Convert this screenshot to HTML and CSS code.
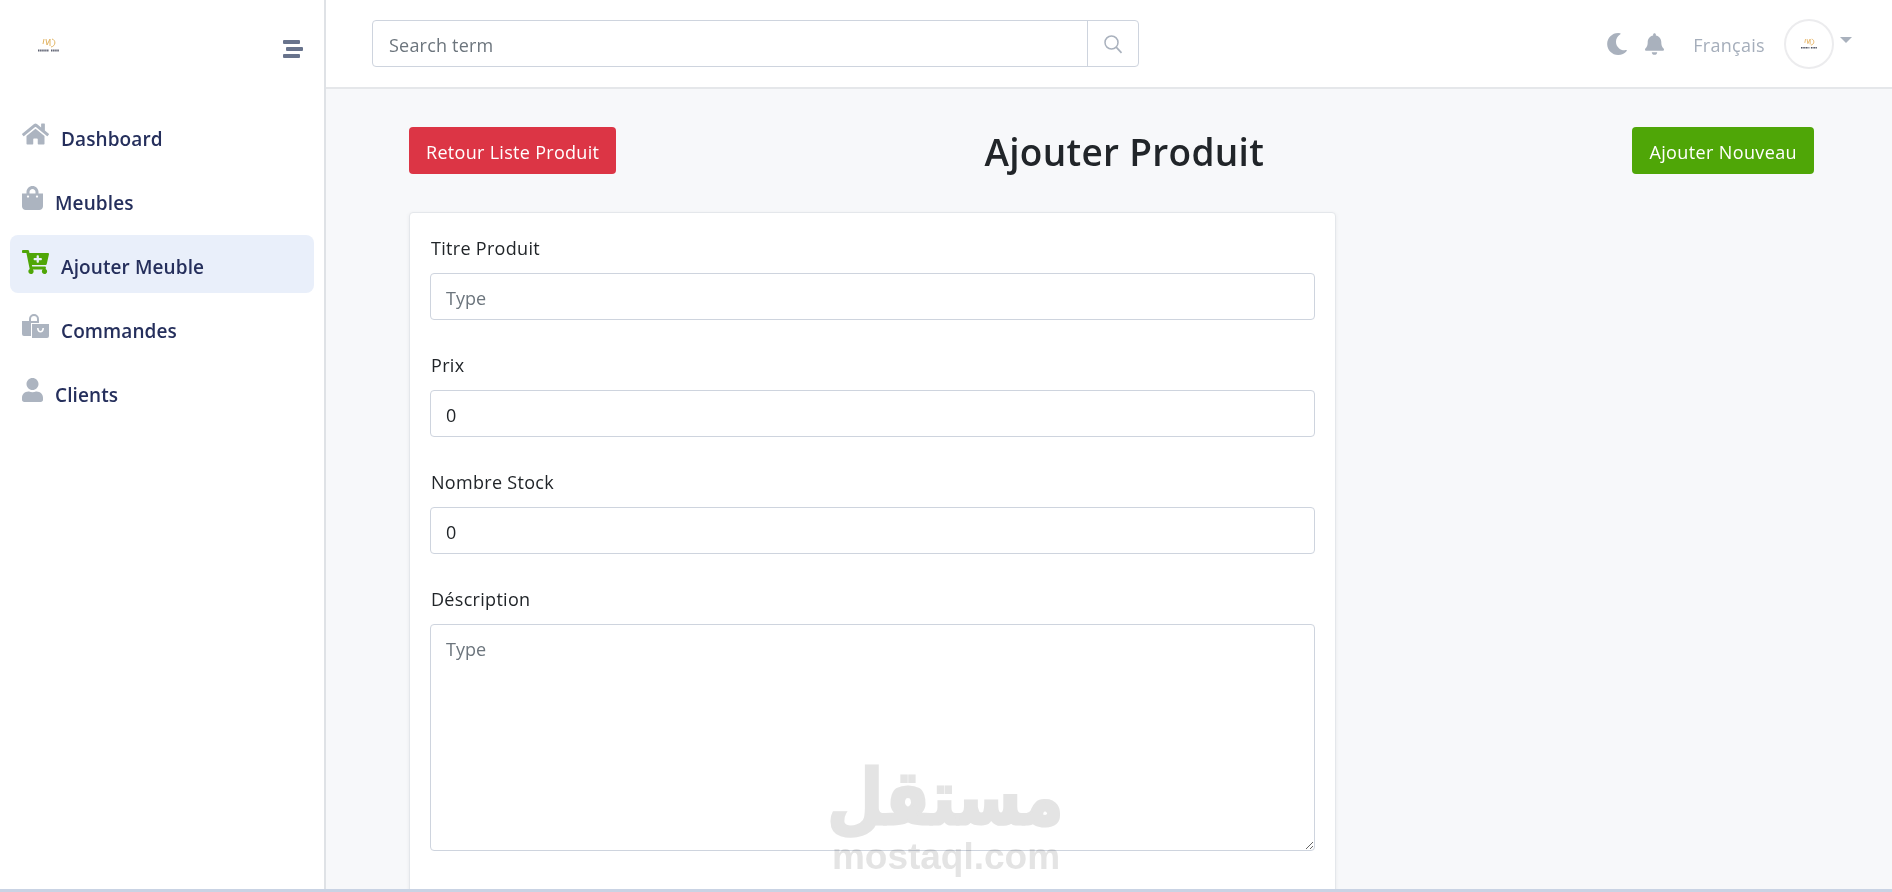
FILE: index.html
```html
<!DOCTYPE html>
<html lang="fr">
<head>
  <meta charset="UTF-8" />
  <meta name="viewport" content="width=device-width, initial-scale=1" />
  <title>Ajouter Produit</title>
  <link rel="stylesheet" href="styles.css">
</head>
<body>
  <div class="shell">
    <!-- Sidebar -->
    <aside class="sidebar">
      <div class="brand">
        <svg class="logo" viewBox="0 0 21 15">
          <path d="M6 1 L5 6 M8 1 L9 7 L12 1 L12 8 M14 1 C18 2 18 8 13 9" fill="none" stroke="#e2b565" stroke-width="1"/>
          <path d="M0 12.5 H11 M13 12.5 H21" stroke="#5c6070" stroke-width="2" stroke-dasharray="1.5 .6"/>
        </svg>
        <div class="burger"><span></span><span class="burger-mid"></span><span></span></div>
      </div>
      <nav class="nav">
        <a class="nav-item">
          <svg class="nav-icon icon-wide" viewBox="0 0 576 512"><path d="M280.37 148.26L96 300.11V464a16 16 0 0 0 16 16l112.06-.29a16 16 0 0 0 15.92-16V368a16 16 0 0 1 16-16h64a16 16 0 0 1 16 16v95.64a16 16 0 0 0 16 16.05L464 480a16 16 0 0 0 16-16V300L295.67 148.26a12.19 12.19 0 0 0-15.3 0zM571.6 251.47L488 182.56V44.05a12 12 0 0 0-12-12h-56a12 12 0 0 0-12 12v72.61L318.47 43a48 48 0 0 0-61 0L4.34 251.47a12 12 0 0 0-1.6 16.9l25.5 31A12 12 0 0 0 45.15 301l235.22-193.74a12.19 12.19 0 0 1 15.3 0L530.9 301a12 12 0 0 0 16.9-1.6l25.5-31a12 12 0 0 0-1.7-16.93z"/></svg>
          Dashboard
        </a>
        <a class="nav-item">
          <svg class="nav-icon" viewBox="0 0 448 512"><path d="M352 160v-32C352 57.42 294.579 0 224 0 153.42 0 96 57.42 96 128v32H0v272c0 44.183 35.817 80 80 80h288c44.183 0 80-35.817 80-80V160h-96zm-192-32c0-35.29 28.71-64 64-64s64 28.71 64 64v32H160v-32zm160 120c-13.255 0-24-10.745-24-24s10.745-24 24-24 24 10.745 24 24-10.745 24-24 24zm-192 0c-13.255 0-24-10.745-24-24s10.745-24 24-24 24 10.745 24 24-10.745 24-24 24z"/></svg>
          Meubles
        </a>
        <a class="nav-item active">
          <svg class="nav-icon icon-wide" viewBox="0 0 576 512"><path d="M504.717 320H211.572l6.545 32h268.418c15.401 0 26.816 14.301 23.403 29.319l-5.517 24.276C523.112 414.668 536 433.828 536 456c0 31.202-25.519 56.444-56.824 55.994-29.823-.429-54.35-24.631-55.155-54.447-.44-16.287 6.085-31.049 16.803-41.548H231.176C241.553 426.165 248 440.326 248 456c0 31.813-26.528 57.431-58.67 55.938-28.54-1.325-51.751-24.385-53.251-52.917-1.158-22.034 10.436-41.455 28.051-51.586L93.883 64H24C10.745 64 0 53.255 0 40V24C0 10.745 10.745 0 24 0h102.529c11.401 0 21.228 8.021 23.513 19.19L159.208 64H551.99c15.401 0 26.816 14.301 23.403 29.319l-47.273 208C525.637 312.246 515.923 320 504.717 320zM408 168h-48v-40c0-8.837-7.163-16-16-16h-16c-8.837 0-16 7.163-16 16v40h-48c-8.837 0-16 7.163-16 16v16c0 8.837 7.163 16 16 16h48v40c0 8.837 7.163 16 16 16h16c8.837 0 16-7.163 16-16v-40h48c8.837 0 16-7.163 16-16v-16c0-8.837-7.163-16-16-16z"/></svg>
          Ajouter Meuble
        </a>
        <a class="nav-item">
          <svg class="nav-icon icon-wide" viewBox="0 0 27 24">
            <path fill-rule="evenodd" d="M7 7V5a5 5 0 0 1 10 0v3h-2V5a3 3 0 0 0-6 0v2z"/>
            <path d="M0 7h17v2H9v13H2a2 2 0 0 1-2-2z"/>
            <path fill-rule="evenodd" d="M10 10h17v12a2 2 0 0 1-2 2H10zM15 14c0 6 7 6 7 0h-1.6c0 4-3.8 4-3.8 0z"/>
          </svg>
          Commandes
        </a>
        <a class="nav-item">
          <svg class="nav-icon" viewBox="0 0 448 512"><path d="M224 256c70.7 0 128-57.3 128-128S294.7 0 224 0 96 57.3 96 128s57.3 128 128 128zm89.6 32h-16.7c-22.2 10.2-46.9 16-72.9 16s-50.6-5.8-72.9-16h-16.7C60.2 288 0 348.2 0 422.4V464c0 26.5 21.5 48 48 48h352c26.5 0 48-21.5 48-48v-41.6c0-74.2-60.2-134.4-134.4-134.4z"/></svg>
          Clients
        </a>
      </nav>
    </aside>

    <div class="content">
      <!-- Top bar -->
      <header class="topbar">
        <div class="search">
          <input class="search-input" type="text" placeholder="Search term" />
          <button class="search-btn" type="button">
            <svg viewBox="0 0 20 20" width="20" height="20"><circle cx="8.5" cy="8.5" r="6.5" fill="none" stroke="#a9b1bd" stroke-width="1.5"/><path d="M13.2 13.2 L18.5 18.8" stroke="#a9b1bd" stroke-width="1.7"/></svg>
          </button>
        </div>
        <div class="topbar-right">
          <svg class="top-icon" viewBox="0 0 512 512"><path d="M283.211 512c78.962 0 151.079-35.925 198.857-94.792 7.068-8.708-.639-21.43-11.562-19.35-124.203 23.654-238.262-71.576-238.262-196.954 0-72.222 38.662-138.635 101.498-174.394 9.686-5.512 7.25-20.197-3.756-22.23A258.156 258.156 0 0 0 283.211 0c-141.309 0-256 114.511-256 256 0 141.309 114.511 256 256 256z"/></svg>
          <svg class="top-icon bell" viewBox="0 0 448 512"><path d="M224 512c35.32 0 63.97-28.65 63.97-64H160.03c0 35.35 28.65 64 63.97 64zm215.39-149.71c-19.32-20.76-55.47-51.99-55.47-154.29 0-77.7-54.48-139.9-127.94-155.16V32c0-17.67-14.32-32-31.98-32s-31.98 14.33-31.98 32v20.84C118.56 68.1 64.08 130.3 64.08 208c0 102.3-36.15 133.53-55.47 154.29-6 6.45-8.66 14.16-8.61 21.71.11 16.4 12.98 32 32.1 32h383.8c19.12 0 32-15.6 32.1-32 .05-7.55-2.61-15.27-8.61-21.71z"/></svg>
          <span class="lang">Français</span>
          <div class="avatar">
            <svg class="avatar-logo" viewBox="0 0 21 15">
              <path d="M6 1 L5 6 M8 1 L9 7 L12 1 L12 8 M14 1 C18 2 18 8 13 9" fill="none" stroke="#e2a84f" stroke-width="1"/>
              <path d="M0 12.5 H11 M13 12.5 H21" stroke="#4d5160" stroke-width="2" stroke-dasharray="1.5 .6"/>
            </svg>
          </div>
          <span class="caret"></span>
        </div>
      </header>

      <main class="page">
        <div class="page-head">
          <button class="btn btn-red" type="button">Retour Liste Produit</button>
          <h1 class="page-title">Ajouter Produit</h1>
          <button class="btn btn-green" type="button">Ajouter Nouveau</button>
        </div>

        <form class="card">
          <div class="field">
            <label>Titre Produit</label>
            <input type="text" placeholder="Type" />
          </div>
          <div class="field">
            <label>Prix</label>
            <input type="text" value="0" />
          </div>
          <div class="field">
            <label>Nombre Stock</label>
            <input type="text" value="0" />
          </div>
          <div class="field">
            <label>Déscription</label>
            <textarea placeholder="Type"></textarea>
          </div>
        </form>
      </main>
    </div>
  </div>
  <div class="bottom-line"></div>

  <!-- Watermark -->
  <div class="watermark">
    <span class="wm-ar" dir="rtl" lang="ar">مستقل</span>
    <span class="wm-en">mostaql.com</span>
  </div>
</body>
</html>
```

FILE: styles.css
```css
* {
  box-sizing: border-box;
}

html, body {
  height: 100%;
}

body {
  margin: 0;
  font-family: "Open Sans", "Noto Sans", sans-serif;
  font-size: 18px;
  letter-spacing: 0.3px;
  color: #212529;
  background-color: #f7f8fa;
  overflow: hidden;
}

.shell {
  display: flex;
  height: 889px;
}

.bottom-line {
  height: 3px;
  background-color: #c9d3e4;
}

/* Sidebar */
.sidebar {
  width: 326px;
  flex-shrink: 0;
  background: #fff;
  border-right: 2px solid #dfe2e6;
}

.brand {
  height: 107px;
  padding: 38px 21px 0 38px;
  display: flex;
  justify-content: space-between;
  align-items: flex-start;
}

.logo {
  width: 21px;
  height: 15px;
}

.burger {
  width: 20px;
  margin-top: 2px;
  display: flex;
  flex-direction: column;
  gap: 3px;
}

.burger span {
  display: block;
  width: 17px;
  height: 4px;
  background-color: #68738c;
  border-radius: 1px;
}

.burger .burger-mid {
  margin-left: 3px;
}

.nav {
  padding: 0 10px;
  display: flex;
  flex-direction: column;
  gap: 6px;
}

.nav-item {
  height: 58px;
  padding: 5px 12px 0;
  display: flex;
  align-items: center;
  gap: 12px;
  border-radius: 8px;
  font-size: 19px;
  font-weight: 600;
  letter-spacing: 0.1px;
  color: #252f5c;
}

.nav-icon {
  width: 21px;
  height: 24px;
  margin-top: -9px;
  fill: #acb4c0;
  flex-shrink: 0;
}

.icon-wide {
  width: 27px;
}

.nav-item.active {
  background-color: #e9effa;
}

.nav-item.active .nav-icon {
  fill: #4fa607;
}

/* Top bar */
.content {
  flex: 1;
  min-width: 0;
  display: flex;
  flex-direction: column;
}

.topbar {
  height: 89px;
  flex-shrink: 0;
  padding: 20px 40px 0 46px;
  background: #fff;
  border-bottom: 2px solid #e5e7ea;
  display: flex;
  justify-content: space-between;
  align-items: flex-start;
}

.search {
  width: 767px;
  height: 47px;
  display: flex;
  border: 1px solid #ced4de;
  border-radius: 4px;
}

.search-input {
  flex: 1;
  border: none;
  outline: none;
  background: transparent;
  padding: 2px 16px 0;
  font: inherit;
  letter-spacing: 0.2px;
  border-radius: 4px;
}

.search-input::placeholder,
.field input::placeholder,
.field textarea::placeholder {
  color: #6c757d;
  opacity: 1;
}

.search-btn {
  width: 51px;
  padding: 0;
  border: none;
  border-left: 1px solid #ced4de;
  background: transparent;
  display: flex;
  align-items: center;
  justify-content: center;
}

.topbar-right {
  display: flex;
  align-items: flex-start;
  color: #a5aebb;
}

.top-icon {
  width: 22px;
  height: 22px;
  margin-top: 13px;
  fill: #a9b1bd;
}

.bell {
  width: 19px;
  margin-left: 17px;
}

.lang {
  margin-left: 29px;
  margin-top: 13px;
}

.avatar {
  width: 50px;
  height: 50px;
  margin-left: 19px;
  margin-top: -1px;
  border: 2px solid #ececee;
  border-radius: 50%;
  display: flex;
  align-items: center;
  justify-content: center;
}

.avatar-logo {
  width: 16px;
  height: 12px;
}

.caret {
  margin-left: 6px;
  margin-top: 17px;
  border-top: 6px solid #a9b1bd;
  border-left: 6px solid transparent;
  border-right: 6px solid transparent;
}

/* Page */
.page {
  flex: 1;
  min-height: 0;
  overflow: hidden;
  padding: 38px 78px 0 83px;
}

.page-head {
  display: flex;
  justify-content: space-between;
  align-items: flex-start;
  margin-bottom: 38px;
}

.page-title {
  margin: 0;
  height: 47px;
  font-size: 37px;
  font-weight: 600;
  line-height: 50px;
}

.btn {
  height: 47px;
  padding: 2px 17px 0;
  border: none;
  border-radius: 4px;
  color: #fff;
  font: inherit;
  letter-spacing: 0.38px;
}

.btn-red {
  letter-spacing: 0.3px;
  background-color: #dc3545;
}

.btn-green {
  background-color: #4fa607;
}

.card {
  width: 927px;
  height: 700px;
  padding: 20px;
  background: #fff;
  border: 1px solid #e4e7eb;
  border-radius: 4px;
  box-shadow: 0 1px 4px rgba(0, 0, 0, 0.06);
}

.field {
  margin-bottom: 30px;
}

.field label {
  display: block;
  height: 40px;
  padding-left: 1px;
  line-height: 30px;
}

.field input,
.field textarea {
  display: block;
  width: 100%;
  padding: 2px 15px 0;
  border: 1px solid #ced4de;
  border-radius: 4px;
  font: inherit;
  color: #212529;
  background: #fff;
  outline: none;
}

.field input {
  height: 47px;
}

.field textarea {
  height: 227px;
  padding-top: 12px;
  padding-bottom: 9px;
  line-height: 24px;
}

/* Watermark, sits on top of everything */
.watermark {
  position: absolute;
  left: 822px;
  top: 758px;
  width: 248px;
  text-align: center;
  pointer-events: none;
  color: #e4e4e4;
  mix-blend-mode: multiply;
  letter-spacing: 0;
}

.wm-ar {
  display: block;
  font-family: "DejaVu Sans", sans-serif;
  font-weight: 700;
  font-size: 76px;
  line-height: 80px;
  -webkit-text-stroke: 3px #e4e4e4;
  transform: translateX(12px) scaleX(0.85);
}

.wm-en {
  display: block;
  margin-top: 2px;
  font-family: "Liberation Sans", sans-serif;
  font-weight: 700;
  font-size: 37px;
  line-height: 34px;
}
```
